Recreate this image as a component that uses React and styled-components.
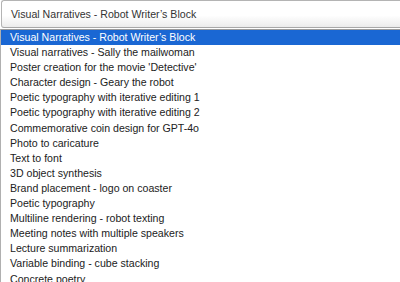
import React from "react";
import styled, { createGlobalStyle } from "styled-components";

const GlobalStyle = createGlobalStyle`
  html, body {
    margin: 0;
    padding: 0;
    background: #fff;
    overflow: hidden;
  }
  body {
    font-family: "Liberation Sans", Arial, sans-serif;
  }
`;

const Wrapper = styled.div`
  width: 400px;
  height: 282px;
  overflow: hidden;
  display: flex;
  flex-direction: column;
`;

const SelectBox = styled.div`
  flex-shrink: 0;
  height: 26px;
  margin-left: 1px;
  border: 1px solid #b4b4b4;
  border-right: none;
  border-bottom-color: #a8a8a8;
  border-radius: 3px 0 0 3px;
  background: linear-gradient(#fff 0%, #fff 55%, #ececec 100%);
  display: flex;
  align-items: center;
  padding-left: 9px;
  font-family: "Liberation Sans", Arial, sans-serif;
  font-size: 10.6px;
  color: #333;
`;

const List = styled.ul`
  flex-shrink: 0;
  list-style: none;
  margin: 1px 0 0 0;
  padding: 0;
  border-top: 1px solid #9a9a9a;
  border-left: 1px solid #b0b0b0;
  display: flex;
  flex-direction: column;
`;

const Option = styled.li`
  flex-shrink: 0;
  height: 15.1px;
  line-height: 15px;
  padding-left: 9px;
  font-family: "Liberation Sans", Arial, sans-serif;
  font-size: 10.6px;
  white-space: nowrap;
  color: ${(p) => (p.$active ? "#fff" : "#222")};
  background: ${(p) => (p.$active ? "#1a67d3" : "transparent")};
`;

const items = [
  "Visual Narratives - Robot Writer’s Block",
  "Visual narratives - Sally the mailwoman",
  "Poster creation for the movie 'Detective'",
  "Character design - Geary the robot",
  "Poetic typography with iterative editing 1",
  "Poetic typography with iterative editing 2",
  "Commemorative coin design for GPT-4o",
  "Photo to caricature",
  "Text to font",
  "3D object synthesis",
  "Brand placement - logo on coaster",
  "Poetic typography",
  "Multiline rendering - robot texting",
  "Meeting notes with multiple speakers",
  "Lecture summarization",
  "Variable binding - cube stacking",
  "Concrete poetry",
];

export default function App() {
  return (
    <Wrapper>
      <GlobalStyle />
      <SelectBox>{items[0]}</SelectBox>
      <List>
        {items.map((t, i) => (
          <Option key={t} $active={i === 0}>
            {t}
          </Option>
        ))}
      </List>
    </Wrapper>
  );
}
